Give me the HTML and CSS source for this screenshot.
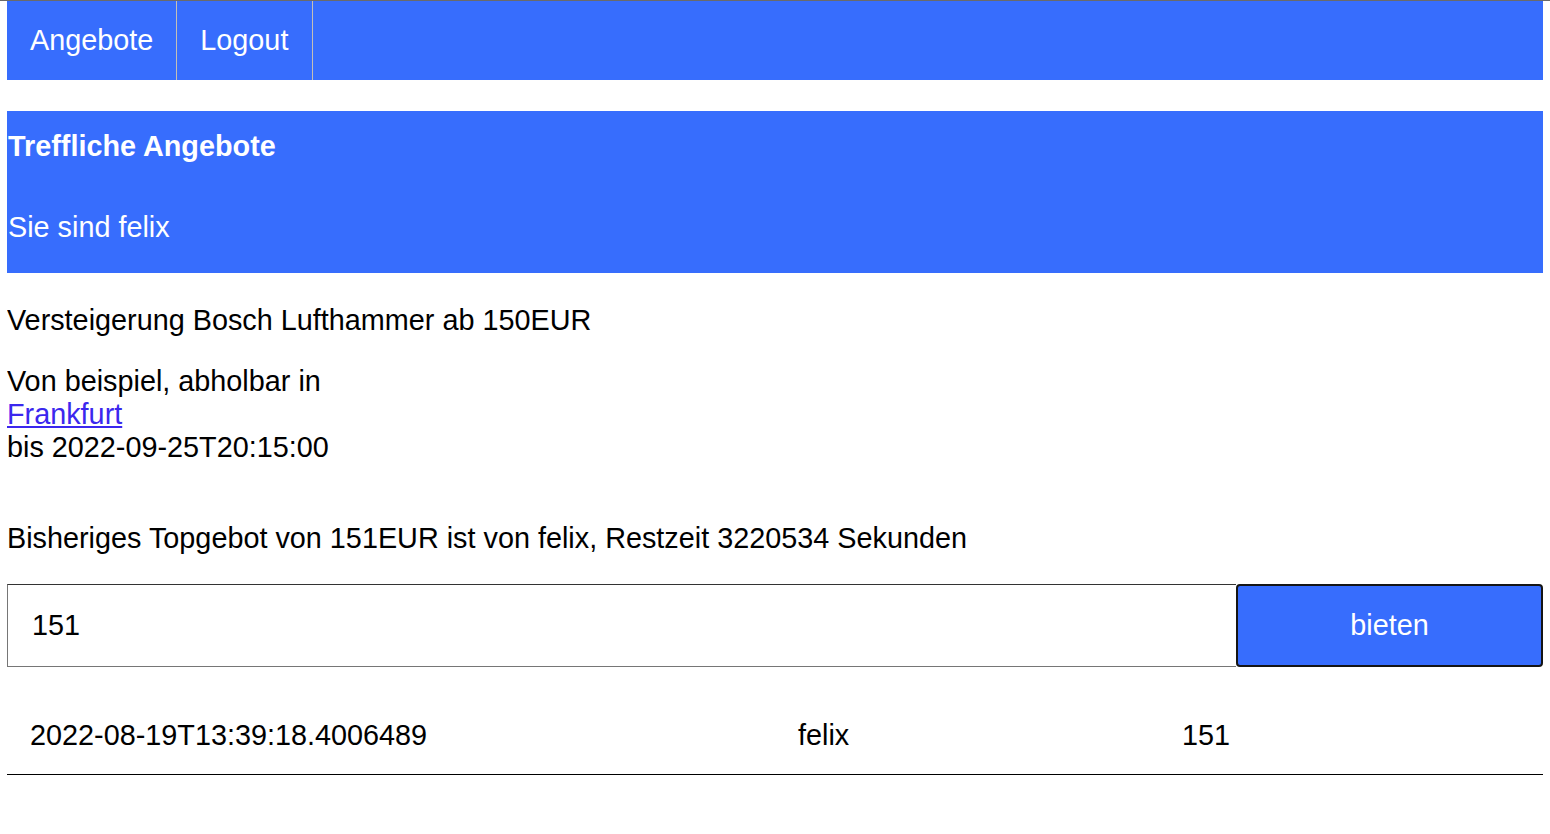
FILE: index.html
```html
<!DOCTYPE html>
<html lang="de">
<head>
<meta charset="utf-8">
<title>Treffliche Angebote</title>
<link rel="stylesheet" href="styles.css">
</head>
<body>
<nav class="nav">
  <a class="nav-item" href="#">Angebote</a>
  <a class="nav-item nav-item-last" href="#">Logout</a>
</nav>
<header class="banner">
  <h1 class="banner-title">Treffliche Angebote</h1>
  <p class="banner-user">Sie sind felix</p>
</header>
<main class="content">
  <p class="line">Versteigerung Bosch Lufthammer ab 150EUR</p>
  <p class="line details">Von beispiel, abholbar in<br><a class="link" href="#">Frankfurt</a><br>bis 2022-09-25T20:15:00</p>
  <p class="line top-bid">Bisheriges Topgebot von 151EUR ist von felix, Restzeit 3220534 Sekunden</p>
  <form class="bid-form">
    <input class="bid-input" type="text" value="151">
    <button class="bid-button" type="button">bieten</button>
  </form>
  <table class="bids">
    <tr>
      <td class="col-date">2022-08-19T13:39:18.4006489</td>
      <td class="col-user">felix</td>
      <td class="col-amount">151</td>
    </tr>
  </table>
</main>
</body>
</html>
```
FILE: styles.css
```css
html {
  border-top: 1px solid #6a6a6a;
}
body {
  margin: 0 7px;
  font-family: "Liberation Sans", Arial, sans-serif;
  font-size: 28.8px;
  line-height: 33px;
  color: #000;
  background: #fff;
}
.nav {
  display: flex;
  height: 79px;
  background: #376dfd;
}
.nav-item {
  display: flex;
  align-items: center;
  padding: 0 23px;
  color: #fff;
  text-decoration: none;
  border-right: 1px solid #c4bfb6;
}
.nav-item-last {
  padding-right: 24px;
}
.banner {
  margin-top: 31px;
  background: #376dfd;
  color: #fff;
  padding: 19px 0 29px 1px;
}
.banner-title {
  margin: 0;
  font-size: 28.8px;
  font-weight: bold;
  line-height: 33px;
}
.banner-user {
  margin: 48px 0 0;
}
.content {
  padding-top: 31px;
}
.line {
  margin: 0;
}
.details {
  margin-top: 28px;
}
.link {
  color: #3b27ee;
}
.top-bid {
  margin-top: 58px;
}
.bid-form {
  display: flex;
  margin-top: 29px;
  height: 83px;
}
.bid-input {
  flex: 1;
  box-sizing: border-box;
  height: 83px;
  margin: 0;
  padding: 0 24px;
  border: 1px solid #767676;
  border-top-color: #333;
  border-right: 0;
  font: inherit;
  color: #000;
  outline: none;
}
.bid-button {
  box-sizing: border-box;
  width: 307px;
  height: 83px;
  margin: 0;
  border: 2px solid #151515;
  border-radius: 4px;
  background: #376dfd;
  color: #fff;
  font: inherit;
}
.bids {
  width: 100%;
  margin-top: 29px;
  border-collapse: collapse;
}
.bids td {
  padding: 23px 23px 22px;
  border-bottom: 1px solid #000;
  line-height: 33px;
}
.col-date {
  width: 50%;
}
.col-user,
.col-amount {
  width: 25%;
}
```
